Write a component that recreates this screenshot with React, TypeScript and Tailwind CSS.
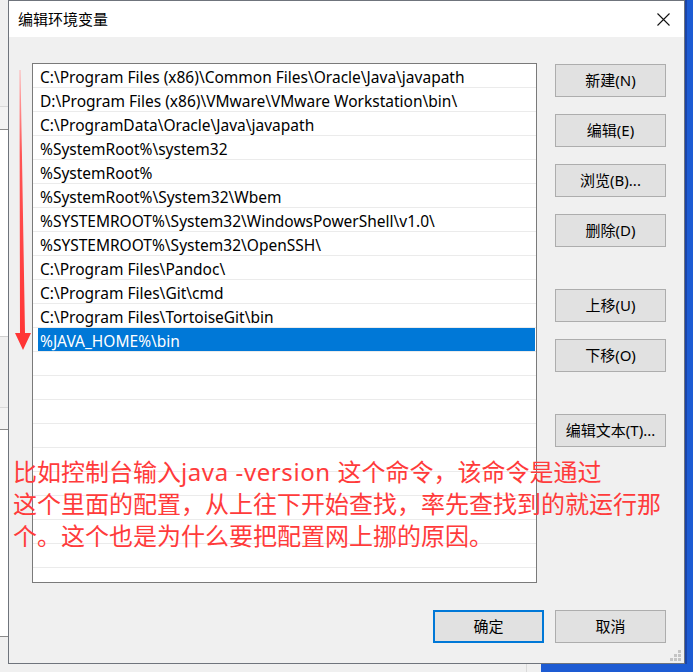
import React from "react"

const paths = [
  "C:\\Program Files (x86)\\Common Files\\Oracle\\Java\\javapath",
  "D:\\Program Files (x86)\\VMware\\VMware Workstation\\bin\\",
  "C:\\ProgramData\\Oracle\\Java\\javapath",
  "%SystemRoot%\\system32",
  "%SystemRoot%",
  "%SystemRoot%\\System32\\Wbem",
  "%SYSTEMROOT%\\System32\\WindowsPowerShell\\v1.0\\",
  "%SYSTEMROOT%\\System32\\OpenSSH\\",
  "C:\\Program Files\\Pandoc\\",
  "C:\\Program Files\\Git\\cmd",
  "C:\\Program Files\\TortoiseGit\\bin",
  "%JAVA_HOME%\\bin",
]

const font = { fontFamily: '"Noto Sans", "Noto Sans CJK SC", sans-serif' }

function WinButton({ label, primary }: { label: string; primary?: boolean }) {
  return (
    <button
      className={
        "w-[111px] h-[33px] bg-[#e1e1e1] text-[15px] text-black flex items-center justify-center " +
        (primary ? "border-2 border-[#0078d7]" : "border border-[#adadad]")
      }
    >
      {label}
    </button>
  )
}

export default function App() {
  const rows = Array.from({ length: 22 }, (_, i) => paths[i] ?? "")

  return (
    <div className="relative w-[693px] h-[672px] overflow-hidden bg-[#f0f0f0] flex flex-col" style={font}>
      <div className="flex h-[664px]">
        {/* background window on the left */}
        <div className="w-[8px] flex flex-col">
          <div className="h-[107px] bg-[#f0f0f0] border-b border-[#d9d9d9]" />
          <div className="h-[23px] bg-[#f3f3f3] border-b border-[#8a8a8a]" />
          <div className="h-[207px] bg-white border-b border-[#cfcfcf]" />
          <div className="h-[71px] bg-[#f0f0f0] border-b border-[#d9d9d9]" />
          <div className="h-[22px] bg-[#f3f3f3] border-b border-[#8a8a8a]" />
          <div className="h-[207px] bg-white border-b border-[#8a8a8a]" />
          <div className="flex-1 bg-[#f0f0f0]" />
        </div>

        {/* dialog */}
        <div className="relative w-[677px] border border-[#6f747c] flex flex-col">
          {/* title bar */}
          <div className="h-[36px] bg-white flex items-center justify-between pl-[9px] pr-[14px]">
            <span className="text-[15px] text-black" style={{ fontFamily: '"Noto Sans CJK SC", sans-serif' }}>
              编辑环境变量
            </span>
            <svg width="13" height="13" viewBox="0 0 13 13">
              <path d="M0.5 0.5 L12.5 12.5 M12.5 0.5 L0.5 12.5" stroke="#111" strokeWidth="1.1" />
            </svg>
          </div>

          {/* body */}
          <div className="flex-1 bg-[#f0f0f0] flex flex-col pl-[23px] pt-[26px]">
            <div className="flex gap-[18px]">
              {/* list */}
              <div className="w-[505px] h-[520px] bg-white border border-[#7a7a7a] overflow-hidden">
                {rows.map((p, i) => {
                  const selected = i === 11
                  return (
                    <div key={i} className="h-[24px] border-b border-[#ebebeb] flex items-stretch overflow-hidden">
                      {selected ? (
                        <div className="ml-[5px] mr-[1px] flex-1 bg-[#0078d7] text-white text-[15.5px] leading-[27px] pl-[2px]">
                          {p}
                        </div>
                      ) : (
                        <div className="pl-[7px] text-[15.5px] leading-[27px] text-black whitespace-nowrap">{p}</div>
                      )}
                    </div>
                  )
                })}
              </div>

              {/* buttons */}
              <div className="flex flex-col pt-[1px]">
                <div className="flex flex-col gap-[17px]">
                  <WinButton label="新建(N)" />
                  <WinButton label="编辑(E)" />
                  <WinButton label="浏览(B)..." />
                  <WinButton label="删除(D)" />
                </div>
                <div className="flex flex-col gap-[17px] mt-[42px]">
                  <WinButton label="上移(U)" />
                  <WinButton label="下移(O)" />
                </div>
                <div className="mt-[42px]">
                  <WinButton label="编辑文本(T)..." />
                </div>
              </div>
            </div>

            <div className="flex gap-[11px] mt-[27px] ml-[401px]">
              <WinButton label="确定" primary />
              <WinButton label="取消" />
            </div>
          </div>

          {/* resize grip */}
          <svg className="absolute right-[2px] bottom-[1px]" width="12" height="12" viewBox="0 0 12 12">
            <rect x="8" y="0" width="3" height="3" fill="#c4c4c4" />
            <rect x="4" y="4" width="3" height="3" fill="#c4c4c4" />
            <rect x="8" y="4" width="3" height="3" fill="#c4c4c4" />
            <rect x="0" y="8" width="3" height="3" fill="#c4c4c4" />
            <rect x="4" y="8" width="3" height="3" fill="#c4c4c4" />
            <rect x="8" y="8" width="3" height="3" fill="#c4c4c4" />
          </svg>
        </div>

        {/* blue desktop on the right */}
        <div className="flex-1 bg-[#1d5bd3] border-l-2 border-[#1a44a8]" />
      </div>

      {/* strip below dialog */}
      <div className="flex-1 flex">
        <div className="w-[527px] bg-[#f0f0f0] border-r border-[#dadada]" />
        <div className="w-[14px] bg-[#f0f0f0]" />
        <div className="flex-1 bg-[#1d5bd3]" />
      </div>

      {/* red annotation overlay */}
      <svg className="absolute left-0 top-0 pointer-events-none" width="693" height="672">
        <defs>
          <linearGradient id="arrowFade" x1="0" y1="0" x2="0" y2="1">
            <stop offset="0" stopColor="#ffb3b3" />
            <stop offset="0.3" stopColor="#ff5555" />
            <stop offset="1" stopColor="#ff3333" />
          </linearGradient>
        </defs>
        <polygon
          points="19.5,70 20.5,70 25,333 31,333 23,350 15,333 20,333"
          fill="url(#arrowFade)"
        />
      </svg>

      <div
        className="absolute left-[13px] top-[456px] text-[24px] leading-[32px] text-[#ff3b3b] whitespace-nowrap"
        style={{ fontFamily: '"Noto Sans", "Noto Sans CJK SC", sans-serif' }}
      >
        <div>
          比如控制台输入<span className="tracking-[0.6px]">java -version </span>这个命令，该命令是通过
        </div>
        <div>这个里面的配置，从上往下开始查找，率先查找到的就运行那</div>
        <div>个。这个也是为什么要把配置网上挪的原因。</div>
      </div>
    </div>
  )
}
